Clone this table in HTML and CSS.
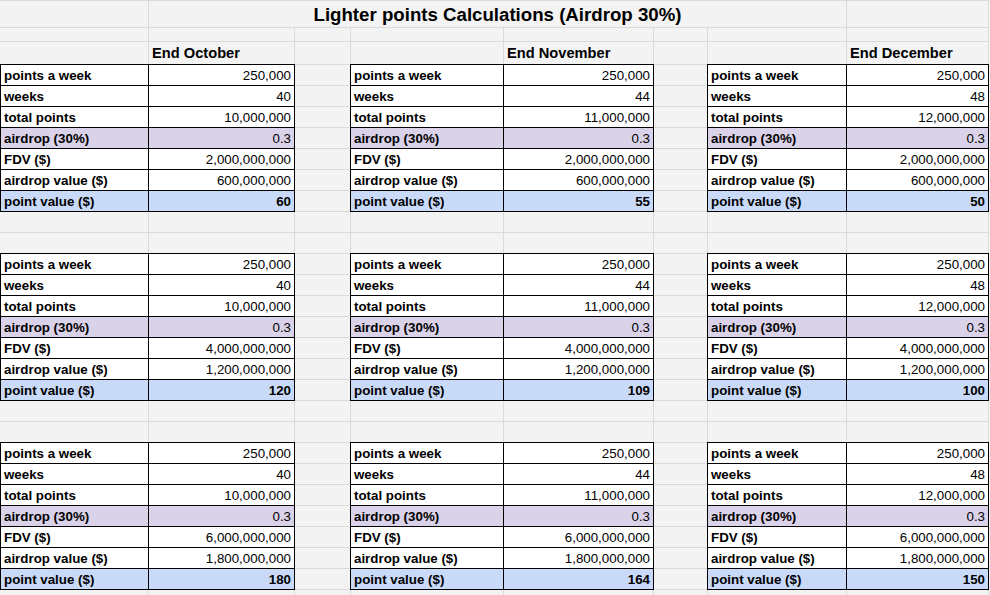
FILE: index.html
```html
<!DOCTYPE html>
<html lang="en">
<head>
<meta charset="utf-8">
<title>Lighter points Calculations (Airdrop 30%)</title>
<link rel="stylesheet" href="styles.css">
</head>
<body>
<div class="sheet">
  <div class="row r-title">
    <div class="c"></div>
    <div class="c title">Lighter points Calculations (Airdrop 30%)</div>
    <div class="c"></div>
  </div>
  <div class="row r-thin">
    <div class="c"></div><div class="c"></div><div class="c"></div><div class="c"></div><div class="c"></div><div class="c"></div><div class="c"></div><div class="c"></div>
  </div>
  <div class="row r-head">
    <div class="c"></div><div class="c head">End October</div><div class="c"></div><div class="c"></div><div class="c head">End November</div><div class="c"></div><div class="c"></div><div class="c head">End December</div>
  </div>

  <!-- Block 1 -->
  <div class="row top">
    <div class="c t edge lab">points a week</div><div class="c t val">250,000</div><div class="c"></div>
    <div class="c t lead lab">points a week</div><div class="c t val">250,000</div><div class="c"></div>
    <div class="c t lead lab">points a week</div><div class="c t val">250,000</div>
  </div>
  <div class="row">
    <div class="c t edge lab">weeks</div><div class="c t val">40</div><div class="c"></div>
    <div class="c t lead lab">weeks</div><div class="c t val">44</div><div class="c"></div>
    <div class="c t lead lab">weeks</div><div class="c t val">48</div>
  </div>
  <div class="row">
    <div class="c t edge lab">total points</div><div class="c t val">10,000,000</div><div class="c"></div>
    <div class="c t lead lab">total points</div><div class="c t val">11,000,000</div><div class="c"></div>
    <div class="c t lead lab">total points</div><div class="c t val">12,000,000</div>
  </div>
  <div class="row purple">
    <div class="c t edge lab">airdrop (30%)</div><div class="c t val">0.3</div><div class="c"></div>
    <div class="c t lead lab">airdrop (30%)</div><div class="c t val">0.3</div><div class="c"></div>
    <div class="c t lead lab">airdrop (30%)</div><div class="c t val">0.3</div>
  </div>
  <div class="row">
    <div class="c t edge lab">FDV ($)</div><div class="c t val">2,000,000,000</div><div class="c"></div>
    <div class="c t lead lab">FDV ($)</div><div class="c t val">2,000,000,000</div><div class="c"></div>
    <div class="c t lead lab">FDV ($)</div><div class="c t val">2,000,000,000</div>
  </div>
  <div class="row">
    <div class="c t edge lab">airdrop value ($)</div><div class="c t val">600,000,000</div><div class="c"></div>
    <div class="c t lead lab">airdrop value ($)</div><div class="c t val">600,000,000</div><div class="c"></div>
    <div class="c t lead lab">airdrop value ($)</div><div class="c t val">600,000,000</div>
  </div>
  <div class="row blue">
    <div class="c t edge lab">point value ($)</div><div class="c t val strong">60</div><div class="c"></div>
    <div class="c t lead lab">point value ($)</div><div class="c t val strong">55</div><div class="c"></div>
    <div class="c t lead lab">point value ($)</div><div class="c t val strong">50</div>
  </div>

  <div class="row">
    <div class="c"></div><div class="c"></div><div class="c"></div><div class="c"></div><div class="c"></div><div class="c"></div><div class="c"></div><div class="c"></div>
  </div>
  <div class="row">
    <div class="c"></div><div class="c"></div><div class="c"></div><div class="c"></div><div class="c"></div><div class="c"></div><div class="c"></div><div class="c"></div>
  </div>

  <!-- Block 2 -->
  <div class="row top">
    <div class="c t edge lab">points a week</div><div class="c t val">250,000</div><div class="c"></div>
    <div class="c t lead lab">points a week</div><div class="c t val">250,000</div><div class="c"></div>
    <div class="c t lead lab">points a week</div><div class="c t val">250,000</div>
  </div>
  <div class="row">
    <div class="c t edge lab">weeks</div><div class="c t val">40</div><div class="c"></div>
    <div class="c t lead lab">weeks</div><div class="c t val">44</div><div class="c"></div>
    <div class="c t lead lab">weeks</div><div class="c t val">48</div>
  </div>
  <div class="row">
    <div class="c t edge lab">total points</div><div class="c t val">10,000,000</div><div class="c"></div>
    <div class="c t lead lab">total points</div><div class="c t val">11,000,000</div><div class="c"></div>
    <div class="c t lead lab">total points</div><div class="c t val">12,000,000</div>
  </div>
  <div class="row purple">
    <div class="c t edge lab">airdrop (30%)</div><div class="c t val">0.3</div><div class="c"></div>
    <div class="c t lead lab">airdrop (30%)</div><div class="c t val">0.3</div><div class="c"></div>
    <div class="c t lead lab">airdrop (30%)</div><div class="c t val">0.3</div>
  </div>
  <div class="row">
    <div class="c t edge lab">FDV ($)</div><div class="c t val">4,000,000,000</div><div class="c"></div>
    <div class="c t lead lab">FDV ($)</div><div class="c t val">4,000,000,000</div><div class="c"></div>
    <div class="c t lead lab">FDV ($)</div><div class="c t val">4,000,000,000</div>
  </div>
  <div class="row">
    <div class="c t edge lab">airdrop value ($)</div><div class="c t val">1,200,000,000</div><div class="c"></div>
    <div class="c t lead lab">airdrop value ($)</div><div class="c t val">1,200,000,000</div><div class="c"></div>
    <div class="c t lead lab">airdrop value ($)</div><div class="c t val">1,200,000,000</div>
  </div>
  <div class="row blue">
    <div class="c t edge lab">point value ($)</div><div class="c t val strong">120</div><div class="c"></div>
    <div class="c t lead lab">point value ($)</div><div class="c t val strong">109</div><div class="c"></div>
    <div class="c t lead lab">point value ($)</div><div class="c t val strong">100</div>
  </div>

  <div class="row">
    <div class="c"></div><div class="c"></div><div class="c"></div><div class="c"></div><div class="c"></div><div class="c"></div><div class="c"></div><div class="c"></div>
  </div>
  <div class="row">
    <div class="c"></div><div class="c"></div><div class="c"></div><div class="c"></div><div class="c"></div><div class="c"></div><div class="c"></div><div class="c"></div>
  </div>

  <!-- Block 3 -->
  <div class="row top">
    <div class="c t edge lab">points a week</div><div class="c t val">250,000</div><div class="c"></div>
    <div class="c t lead lab">points a week</div><div class="c t val">250,000</div><div class="c"></div>
    <div class="c t lead lab">points a week</div><div class="c t val">250,000</div>
  </div>
  <div class="row">
    <div class="c t edge lab">weeks</div><div class="c t val">40</div><div class="c"></div>
    <div class="c t lead lab">weeks</div><div class="c t val">44</div><div class="c"></div>
    <div class="c t lead lab">weeks</div><div class="c t val">48</div>
  </div>
  <div class="row">
    <div class="c t edge lab">total points</div><div class="c t val">10,000,000</div><div class="c"></div>
    <div class="c t lead lab">total points</div><div class="c t val">11,000,000</div><div class="c"></div>
    <div class="c t lead lab">total points</div><div class="c t val">12,000,000</div>
  </div>
  <div class="row purple">
    <div class="c t edge lab">airdrop (30%)</div><div class="c t val">0.3</div><div class="c"></div>
    <div class="c t lead lab">airdrop (30%)</div><div class="c t val">0.3</div><div class="c"></div>
    <div class="c t lead lab">airdrop (30%)</div><div class="c t val">0.3</div>
  </div>
  <div class="row">
    <div class="c t edge lab">FDV ($)</div><div class="c t val">6,000,000,000</div><div class="c"></div>
    <div class="c t lead lab">FDV ($)</div><div class="c t val">6,000,000,000</div><div class="c"></div>
    <div class="c t lead lab">FDV ($)</div><div class="c t val">6,000,000,000</div>
  </div>
  <div class="row">
    <div class="c t edge lab">airdrop value ($)</div><div class="c t val">1,800,000,000</div><div class="c"></div>
    <div class="c t lead lab">airdrop value ($)</div><div class="c t val">1,800,000,000</div><div class="c"></div>
    <div class="c t lead lab">airdrop value ($)</div><div class="c t val">1,800,000,000</div>
  </div>
  <div class="row blue">
    <div class="c t edge lab">point value ($)</div><div class="c t val strong">180</div><div class="c"></div>
    <div class="c t lead lab">point value ($)</div><div class="c t val strong">164</div><div class="c"></div>
    <div class="c t lead lab">point value ($)</div><div class="c t val strong">150</div>
  </div>

  <div class="row">
    <div class="c"></div><div class="c"></div><div class="c"></div><div class="c"></div><div class="c"></div><div class="c"></div><div class="c"></div><div class="c"></div>
  </div>
</div>
</body>
</html>
```

FILE: styles.css
```css
html, body {
  margin: 0;
  padding: 0;
  background: #f3f3f3;
}

body {
  font-family: "Liberation Sans", Arial, sans-serif;
  font-size: 13.33px;
  color: #000;
  overflow: hidden;
}

.sheet {
  width: 989px;
  border-top: 1px solid #dadada;
}

.row {
  display: grid;
  grid-template-columns: 149px 146px 56px 153px 150px 54px 139px 142px;
  grid-template-rows: 21px;
  height: 21px;
}

.r-title { height: 27px; grid-template-rows: 27px; }
.r-thin { height: 14px; grid-template-rows: 14px; }
.r-head { height: 23px; grid-template-rows: 23px; }

.c {
  box-sizing: border-box;
  background: #f3f3f3;
  border-right: 1px solid #dadada;
  border-bottom: 1px solid #dadada;
  line-height: 20px;
  white-space: nowrap;
  overflow: visible;
  min-width: 0;
}

.title {
  grid-column: 2 / 8;
  text-align: center;
  font-weight: bold;
  font-size: 18.67px;
  line-height: 25px;
  padding-top: 1px;
}

.head {
  font-weight: bold;
  font-size: 14.67px;
  line-height: 22px;
  padding-left: 3px;
}

.t {
  background: #fff;
  border-right-color: #000;
  border-bottom-color: #000;
  padding-top: 2px;
  line-height: 18px;
}

.t.edge {
  border-left: 1px solid #000;
}

.t.lead {
  box-shadow: -1px 0 0 #000;
}

.top .t {
  box-shadow: 0 -1px 0 #000;
}

.top .t.lead {
  box-shadow: -1px 0 0 #000, 0 -1px 0 #000, -1px -1px 0 #000;
}

.purple .t { background: #d9d2e9; }
.blue .t { background: #c9daf8; }

.lab {
  font-weight: bold;
  padding-left: 3px;
}

.val {
  text-align: right;
  padding-right: 3px;
}

.val.strong {
  font-weight: bold;
}
```
